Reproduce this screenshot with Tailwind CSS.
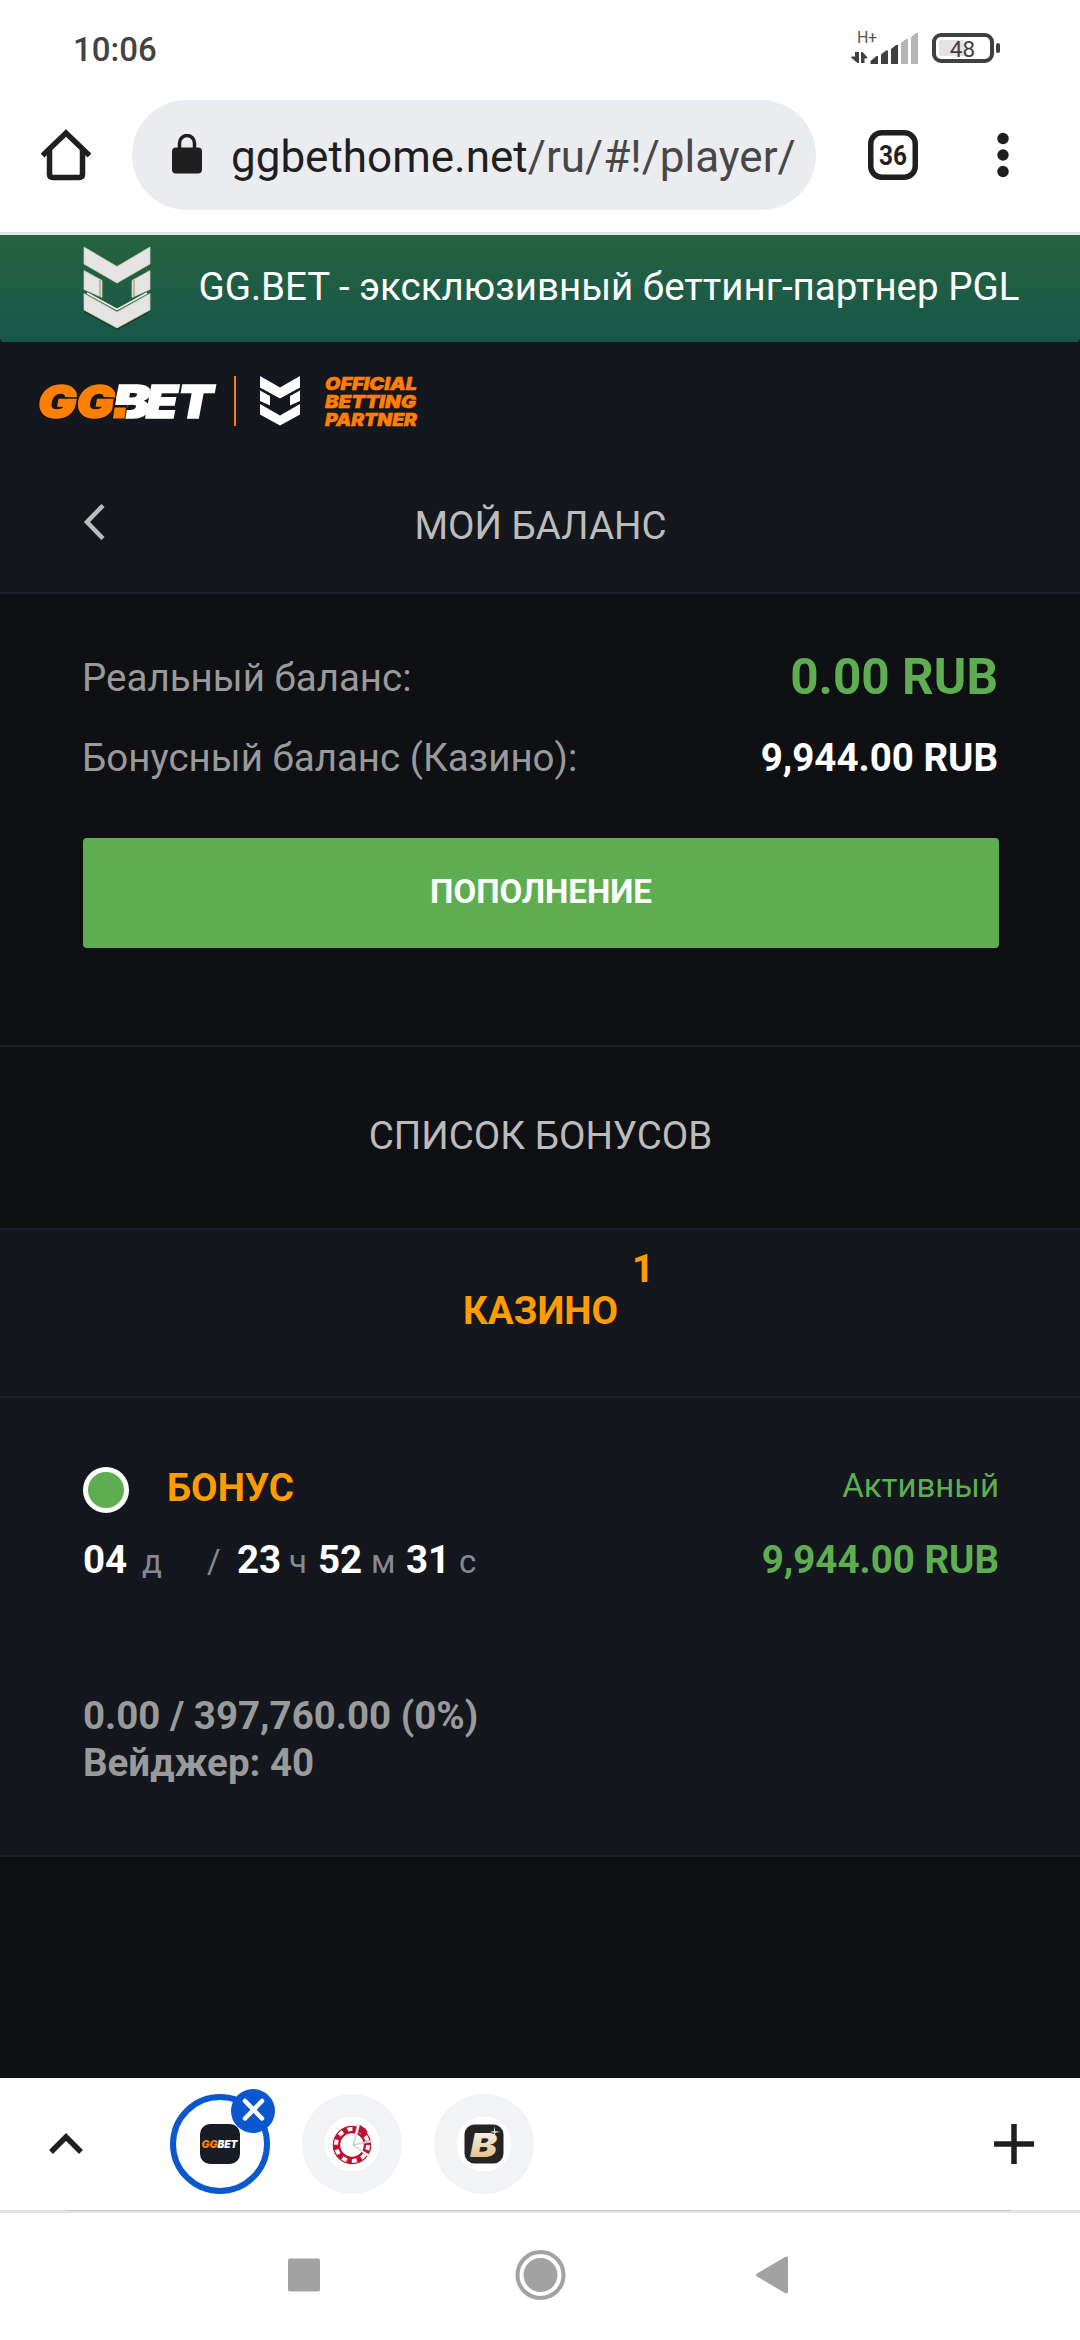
<!DOCTYPE html>
<html lang="ru">
<head>
<meta charset="utf-8">
<title>Мой баланс</title>
<script src="https://cdn.jsdelivr.net/npm/@tailwindcss/browser@4"></script>
</head>
<body class="w-[1080px] h-[2340px] overflow-hidden bg-[#0f1014] font-['Roboto',sans-serif] text-[38.5px] leading-[44px] flex flex-col">

<!-- Status bar -->
<div class="h-[65px] bg-white flex items-start justify-between pl-[73px] pr-[80px] shrink-0">
  <span class="text-[33px] font-medium text-[#434343] leading-[40px] mt-[30px]">10:06</span>
  <svg width="150" height="65" viewBox="0 0 150 65" fill="#404040" font-family="Roboto">
    <text x="7" y="43" font-size="16" fill="#555" textLength="20">H+</text>
    <path d="M9 52v11H7.500l-6.500-5.500 .8-1H5V52zM11 63V52h1.500l5 5.500-.8 1H14.500V63z"/>
    <path d="M20.500 64v-3l6-5h1.500v8zM31 64v-9.500l5-4h2v13.500zM41 64V49l5-4h2v19z"/>
    <path d="M51 64V43l5-4h2v25zM61 64V37l5-4h2v31z" fill="#b5b5b5"/>
    <rect x="89" y="40" width="26" height="16" rx="2" fill="#e3e3e3"/>
    <rect x="84" y="35" width="58" height="26" rx="7" fill="none" stroke="#404040" stroke-width="4"/>
    <rect x="146" y="43" width="4" height="10" rx="2"/>
    <text x="112.500" y="57" font-size="22.500" text-anchor="middle">48</text>
  </svg>
</div>

<!-- Browser toolbar -->
<div class="h-[170px] bg-white border-b-[3px] border-[#dfe5df] flex items-start pt-[35px] shrink-0">
  <svg class="ml-[41px] mt-[29px]" width="50" height="52" viewBox="0 0 50 52" fill="none" stroke="#1f1f1f" stroke-width="5.500">
    <path d="M1.500 26.500 25 4l23.500 22.500" stroke-linejoin="miter"/>
    <path d="M8.500 21v24q0 3.500 3.500 3.500h26q3.500 0 3.500-3.500V21"/>
  </svg>
  <div class="ml-[41px] w-[684px] h-[110px] rounded-full bg-[#ebecf0] flex items-center pl-[40px]">
    <svg class="-mt-[2px]" width="30" height="40" viewBox="0 0 30 40"><rect y="13.500" width="30" height="26" rx="4" fill="#1f1f1f"/><path d="M7.500 15V9a7.500 7.500 0 0 1 15 0v6" fill="none" stroke="#1f1f1f" stroke-width="3.500"/></svg>
    <span class="ml-[29px] mt-[4px] text-[44px] leading-[52px] text-[#1f1f1f] whitespace-nowrap">ggbethome.net<span class="text-[#474747]">/ru/#!/player/</span></span>
  </div>
  <svg class="ml-[52px] mt-[30px]" width="50" height="50" viewBox="0 0 50 50"><rect x="2.750" y="2.750" width="44.500" height="44.500" rx="11" fill="none" stroke="#1f1f1f" stroke-width="5.500"/><text x="11" y="34.500" font-family="Roboto" font-weight="700" font-size="28" textLength="28" lengthAdjust="spacingAndGlyphs" fill="#1f1f1f">36</text></svg>
  <svg class="ml-[79px] mt-[32px]" width="12" height="46" viewBox="0 0 12 46" fill="#1f1f1f"><circle cx="6" cy="6.500" r="5.700"/><circle cx="6" cy="23" r="5.700"/><circle cx="6" cy="39.500" r="5.700"/></svg>
</div>

<div class="bg-[#14171e] shrink-0">
  <!-- Partner banner -->
  <div class="h-[107px] rounded-b bg-linear-to-b from-[#26633f] to-[#17564b] flex items-start text-white">
    <svg class="ml-[83px] mt-[11px]" width="68" height="84" viewBox="0 0 68 84">
      <path d="M1 64 34 82l33-18v2L34 84 1 66z" fill="#123a30"/>
      <g fill="#e6e3e4" stroke="#c9cfa4" stroke-width=".8">
        <path d="M1 1l33 19.500L67 1v17L34 37 1 18z"/>
        <path d="M1 24.500l18 10v17L1 43.500zM67 24.500l-18 10v17l18-8z"/>
        <path d="M1 47.500l33 18.500 33-18.500V64L34 82 1 64z"/>
      </g>
      <path d="M17 34v17M51 34v17" stroke="#8f8a5c" stroke-width="1"/>
      <path d="M4 47l30 16.500L64 47" fill="none" stroke="#f4f1d8" stroke-width="1.800"/>
    </svg>
    <span class="ml-[47.500px] mt-[30px] whitespace-nowrap">GG.BET - эксклюзивный беттинг-партнер PGL</span>
  </div>

  <!-- Brand row -->
  <div class="h-[118px] flex items-start pl-[29px] pt-[14px]">
    <svg width="420" height="90" viewBox="-10 -20 420 90" font-family="Inter" font-weight="900" font-style="italic">
      <g font-size="46" stroke-width="1.600">
        <text x="-1" y="41.500" textLength="77" lengthAdjust="spacingAndGlyphs" fill="#ff7f00" stroke="#ff7f00">GG</text>
        <text x="74" y="41.500" fill="#fff" stroke="#fff" textLength="37" lengthAdjust="spacingAndGlyphs">B</text>
        <text x="107" y="41.500" fill="#fff" stroke="#fff" textLength="67" lengthAdjust="spacingAndGlyphs">ET</text>
        <path d="M72 45l2.500-22h15.500l-1.500 7-2.500 15z" fill="#14171e"/>
        <path d="M76 29l1.500-7h14v7z" fill="#fff"/>
        <path d="M74 42.500l1.500-11h11.500L85.500 42.500z" fill="#ff7f00"/>
      </g>
      <rect x="195" width="2" height="50" fill="#ff7f00"/>
      <path d="M221 0l20 11.500L261 0v11.500L241 22.500l-20-11zM221 14.500l10 5.500v9.500l-10-4.500zM261 14.500 251 20v9.500l10-4.500zM221 28l20 11.500L261 28v10.500L241 49.500l-20-11z" fill="#fff"/>
      <g font-size="18" fill="#ff7f00" stroke="#ff7f00" stroke-width=".5">
        <text x="286" y="13.500" textLength="92" lengthAdjust="spacingAndGlyphs">OFFICIAL</text>
        <text x="286" y="32" textLength="91" lengthAdjust="spacingAndGlyphs">BETTING</text>
        <text x="286" y="50" textLength="92" lengthAdjust="spacingAndGlyphs">PARTNER</text>
      </g>
    </svg>
  </div>

  <!-- Page title -->
  <div class="h-[134px] border-b-2 border-[#1b1f28] grid grid-cols-[1fr_auto_1fr] items-center px-[83px] text-[#bcbcbc]">
    <svg class="-mt-[8px]" width="22" height="36" viewBox="0 0 22 36" fill="none" stroke="#bcbcbc" stroke-width="4.500"><path d="M20 1.500 4 18l16 16.500"/></svg>
    <h1 class="pl-px">МОЙ БАЛАНС</h1>
  </div>
</div>

<!-- Balances -->
<section class="h-[453px] border-b-2 border-[#1a1d24] px-[82px] pt-[44px] text-[#9a9a9a] shrink-0">
  <div class="h-[80px] flex items-center justify-between"><span>Реальный баланс:</span><b class="text-[49.5px] font-bold text-[#5eae51] -mt-[2px]">0.00 RUB</b></div>
  <div class="h-[80px] flex items-center justify-between"><span>Бонусный баланс (Казино):</span><b class="font-bold text-white">9,944.00 RUB</b></div>
  <button class="block mx-px mt-[40px] w-[916px] h-[110px] rounded bg-[#5eae51] text-white font-bold text-[33px] pb-[3px]">ПОПОЛНЕНИЕ</button>
</section>

<section class="h-[183px] border-b-2 border-[#1a1d24] flex items-center justify-center pb-[3px] pl-px text-[#bcbcbc] shrink-0">
  <h2>СПИСОК БОНУСОВ</h2>
</section>

<section class="h-[168px] bg-[#14171e] border-b-2 border-[#1b1f26] flex items-center justify-center pb-[4px] pl-px text-[#ff9c00] font-bold shrink-0">
  <span class="relative">КАЗИНО<sup class="absolute left-full top-[-42px] ml-[14px] text-[38.5px] leading-[44px]">1</sup></span>
</section>

<!-- Active bonus -->
<section class="h-[459px] bg-[#14171e] border-b-2 border-[#1b1f26] pl-[83px] pr-[81px] pt-[67px] shrink-0">
  <div class="h-[50px] flex items-center">
    <span class="size-[46px] rounded-full border-[5px] border-white bg-[#5eae51]"></span>
    <span class="ml-[38px] -mt-[4px] font-bold text-[#ff9c00]">БОНУС</span>
    <span class="ml-auto -mt-[8px] text-[33px] text-[#5eae51]">Активный</span>
  </div>
  <div class="mt-[23px] flex items-baseline text-[33px] leading-[44px] text-[#858994]">
    <b class="w-[59px] text-[38.5px] font-bold text-white">04</b><span class="w-[65px]">д</span><span class="w-[30px]">/</span>
    <b class="w-[52px] text-[38.5px] font-bold text-white">23</b><span class="w-[29px]">ч</span>
    <b class="w-[53px] text-[38.5px] font-bold text-white">52</b><span class="w-[35px]">м</span>
    <b class="w-[53px] text-[38.5px] font-bold text-white">31</b><span>с</span>
    <b class="ml-auto text-[38.5px] font-bold text-[#5eae51]">9,944.00 RUB</b>
  </div>
  <div class="mt-[108px] font-bold leading-[47px] text-[#9a9a9a]">
    <div>0.00 / 397,760.00 (0%)</div>
    <div>Вейджер: 40</div>
  </div>
</section>
<div class="grow"></div>

<!-- Tab strip -->
<div class="h-[135px] bg-white border-b-[3px] border-[#e2e4df] flex items-center pl-[49px] pr-[46px] shrink-0 relative">
  <svg class="mt-[-2px]" width="34" height="22" viewBox="0 0 34 22" fill="none" stroke="#1f1f1f" stroke-width="5.500"><path d="M2 20 17 5l15 15"/></svg>
  <div class="ml-[87px] size-[100px] rounded-full border-[6px] border-[#0b57d0] flex items-center justify-center relative">
    <svg width="40" height="40" viewBox="0 0 40 40" font-family="Inter" font-weight="900" font-style="italic" font-size="10.500"><rect width="40" height="40" rx="10" fill="#171c26"/><text x="1.500" y="24" fill="#ff7f00" textLength="16" lengthAdjust="spacingAndGlyphs">GG</text><text x="17.500" y="24" fill="#fff" textLength="20" lengthAdjust="spacingAndGlyphs">BET</text></svg>
    <svg class="absolute left-[55px] top-[-11px]" width="44" height="44" viewBox="0 0 44 44"><circle cx="22" cy="22" r="22" fill="#0b57d0"/><path d="M14 12 31 29.500M31 12 14 29.500" stroke="#fff" stroke-width="4.500" stroke-linecap="round"/></svg>
  </div>
  <svg class="ml-[32px]" width="100" height="100" viewBox="0 0 100 100"><circle cx="50" cy="50" r="50" fill="#f2f3f5"/><circle cx="50" cy="50" r="27.500" fill="#fff"/>
    <circle cx="50" cy="51" r="15.500" fill="none" stroke="#bd1230" stroke-width="7.500"/><circle cx="50" cy="51" r="16" fill="none" stroke="#fff" stroke-width="4" stroke-dasharray="5 5.053"/>
    <path d="M51 52 58 32l-3-1zM51 51l19-5v2zM51 51l15 12 2-2z" fill="#fff" stroke="#b9b9b9" stroke-width=".6"/>
    <path d="M58 31l6 4 1.500 3.500-4 2.500-5.500-3z" fill="#bd1230"/></svg>
  <svg class="ml-[32px]" width="100" height="100" viewBox="0 0 100 100"><defs><linearGradient id="g" x2="0" y2="1"><stop stop-color="#fff"/><stop offset="1" stop-color="#dfb271"/></linearGradient></defs><circle cx="50" cy="50" r="50" fill="#f2f3f5"/><circle cx="50" cy="50" r="27.500" fill="#fff"/><rect x="30.500" y="30.500" width="39" height="39" rx="10" fill="#242424"/><text x="36" y="62.500" font-family="Inter" font-weight="900" font-style="italic" font-size="33" textLength="27" lengthAdjust="spacingAndGlyphs" fill="url(#g)">B</text><path d="M60.500 32l.7 5 5 1-5 .7-.7 5-.7-5-4-.7 4-1z" fill="#ddd"/></svg>
  <svg class="ml-auto" width="40" height="40" viewBox="0 0 40 40" stroke="#1f1f1f" stroke-width="5.500"><path d="M20 0v40M0 20h40"/></svg>
  <div class="absolute left-[67px] right-[69px] bottom-[-1px] h-px bg-[#c9cbc7]"></div>
</div>

<!-- System navigation -->
<div class="h-[127px] bg-white flex items-start justify-center shrink-0">
  <svg class="mt-[36px]" width="504" height="52" viewBox="0 0 504 52" fill="#a2a2a2">
    <rect x="0" y="9.500" width="32" height="33" rx="2"/>
    <circle cx="252.500" cy="26" r="17"/><circle cx="252.500" cy="26" r="23" fill="none" stroke="#a2a2a2" stroke-width="4"/>
    <path d="M469 24.500 497 8q3-1.500 3 1.500v33q0 3-3 1.500L469 27.500q-2-1.500 0-3z"/>
  </svg>
</div>
</body>
</html>
